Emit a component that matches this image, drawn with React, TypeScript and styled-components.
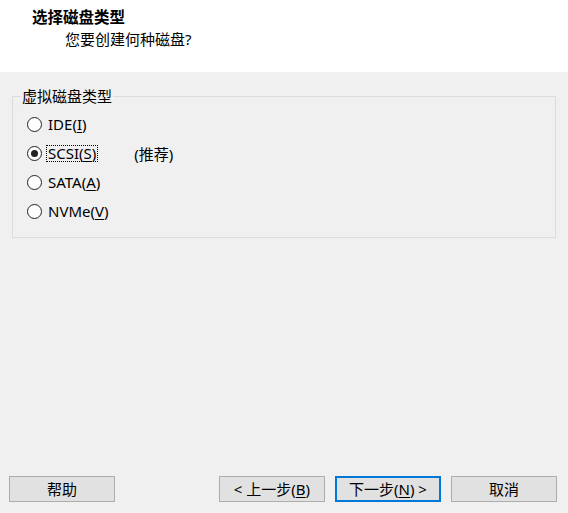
import styled, { createGlobalStyle } from 'styled-components'

const GlobalStyle = createGlobalStyle`
  html, body {
    margin: 0;
    padding: 0;
    background: #f0f0f0;
  }
  body {
    font-family: "Noto Sans", "Noto Sans CJK SC", sans-serif;
    font-size: 15px;
    color: #000;
  }
`

const Wizard = styled.div`
  width: 568px;
  height: 513px;
  display: flex;
  flex-direction: column;
  background: #f0f0f0;
  overflow: hidden;
`

const Header = styled.header`
  height: 72px;
  box-sizing: border-box;
  background: #fff;
  padding: 6px 0 0 32px;
  display: flex;
  flex-direction: column;
`

const Title = styled.div`
  font-weight: bold;
  font-size: 15.5px;
  line-height: 22px;
`

const Subtitle = styled.div`
  padding-left: 33px;
  line-height: 22px;
`

const Body = styled.main`
  flex: 1;
  padding: 14px 12px 0 12px;
`

const Group = styled.fieldset`
  margin: 0;
  padding: 4px 0 0 0;
  height: 152px;
  box-sizing: border-box;
  border: 1px solid #dcdcdc;
`

const Legend = styled.legend`
  padding: 0 1px;
  margin-left: 8px;
  line-height: 20px;
`

const Options = styled.div`
  display: flex;
  flex-direction: column;
  padding-left: 14px;
`

const Option = styled.label`
  height: 29px;
  display: flex;
  align-items: center;
  gap: 5px;
`

const Circle = styled.span<{ $checked?: boolean }>`
  width: 15px;
  height: 15px;
  box-sizing: border-box;
  border-radius: 50%;
  border: 1.5px solid #222;
  background: #fff;
  display: flex;
  align-items: center;
  justify-content: center;

  &::after {
    content: '';
    width: 7px;
    height: 7px;
    border-radius: 50%;
    background: ${(p) => (p.$checked ? '#222' : 'transparent')};
  }
`

const OptionText = styled.span<{ $focused?: boolean }>`
  padding: 0 1px;
  line-height: 15px;
  outline: ${(p) => (p.$focused ? '1px dotted #000' : 'none')};
`

const Hint = styled.span`
  margin-left: 32px;
`

const Key = styled.span`
  text-decoration: underline;
  text-underline-offset: 2px;
`

const Footer = styled.footer`
  display: flex;
  align-items: center;
  padding: 0 11px 11px 9px;
  gap: 10px;
`

const Spacer = styled.div`
  flex: 1;
`

const Button = styled.button<{ $primary?: boolean }>`
  width: 106px;
  height: 26px;
  box-sizing: border-box;
  margin: 0;
  padding: 0;
  font: inherit;
  color: #000;
  background: #e1e1e1;
  border: ${(p) => (p.$primary ? '2px solid #0078d7' : '1px solid #adadad')};
  line-height: 20px;
`

const options = [
  { label: 'IDE', key: 'I' },
  { label: 'SCSI', key: 'S', checked: true },
  { label: 'SATA', key: 'A' },
  { label: 'NVMe', key: 'V' },
]

export default function App() {
  return (
    <Wizard>
      <GlobalStyle />
      <Header>
        <Title>选择磁盘类型</Title>
        <Subtitle>您要创建何种磁盘?</Subtitle>
      </Header>
      <Body>
        <Group>
          <Legend>虚拟磁盘类型</Legend>
          <Options>
            {options.map((o) => (
              <Option key={o.label}>
                <Circle $checked={o.checked} />
                <OptionText $focused={o.checked}>
                  {o.label}(<Key>{o.key}</Key>)
                </OptionText>
                {o.checked && <Hint>(推荐)</Hint>}
              </Option>
            ))}
          </Options>
        </Group>
      </Body>
      <Footer>
        <Button>帮助</Button>
        <Spacer />
        <Button>
          &lt; 上一步(<Key>B</Key>)
        </Button>
        <Button $primary>
          下一步(<Key>N</Key>) &gt;
        </Button>
        <Button>取消</Button>
      </Footer>
    </Wizard>
  )
}
